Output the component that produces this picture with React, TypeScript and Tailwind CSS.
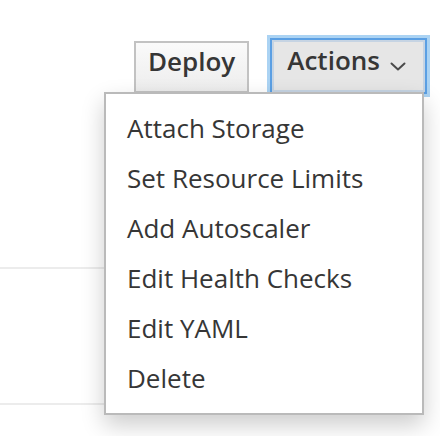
const items = [
  'Attach Storage',
  'Set Resource Limits',
  'Add Autoscaler',
  'Edit Health Checks',
  'Edit YAML',
  'Delete',
];

function AngleDown() {
  return (
    <svg width="16" height="9" viewBox="0 0 16 9" fill="none" className="ml-[10px] mt-[17px]">
      <path d="M1.5 1.5 L8 7.5 L14.5 1.5" stroke="#4a4a4a" strokeWidth="2" strokeLinecap="round" strokeLinejoin="round" />
    </svg>
  );
}

export default function App() {
  return (
    <div
      className="relative h-[436px] w-[440px] overflow-hidden bg-white text-[#363636]"
      style={{ fontFamily: '"Open Sans", "Liberation Sans", sans-serif' }}
    >
      {/* toolbar */}
      <div className="flex items-start pl-[134px] pt-[38px]">
        <button className="mt-[3px] h-[52px] self-start border-2 border-[#c2c2c2] bg-gradient-to-b from-[#fafafa] to-[#ededed] px-[12px] pt-[2px] text-left text-[26px] font-semibold leading-[30px] text-[#363636]">
          <span className="block h-[44px]">Deploy</span>
        </button>
        <button className="ml-[21px] flex h-[56px] items-start border-2 border-[#5b9fe3] bg-[#e6e6e6] pl-[15px] pr-[19px] pt-[5px] text-[26px] font-semibold leading-[30px] text-[#363636] shadow-[0_0_0_3px_rgba(102,175,233,0.55),inset_0_0_0_2px_rgba(160,190,225,0.45)]">
          <span className="block">Actions</span>
          <AngleDown />
        </button>
      </div>

      {/* table rows behind the menu */}
      <div className="w-[300px]">
        <div className="h-[175px] border-b-2 border-[#ececec]" />
        <div className="h-[136px] border-b-2 border-[#ececec]" />
      </div>

      {/* dropdown menu */}
      <ul className="absolute left-[104px] top-[92px] z-10 w-[320px] border-2 border-[#bababa] bg-white pb-[10px] pt-[9px] shadow-[0_10px_22px_rgba(0,0,0,0.2)]">
        {items.map((label) => (
          <li key={label} className="pl-[21px] text-[26px] leading-[50px] text-[#363636]">
            {label}
          </li>
        ))}
      </ul>
    </div>
  );
}
